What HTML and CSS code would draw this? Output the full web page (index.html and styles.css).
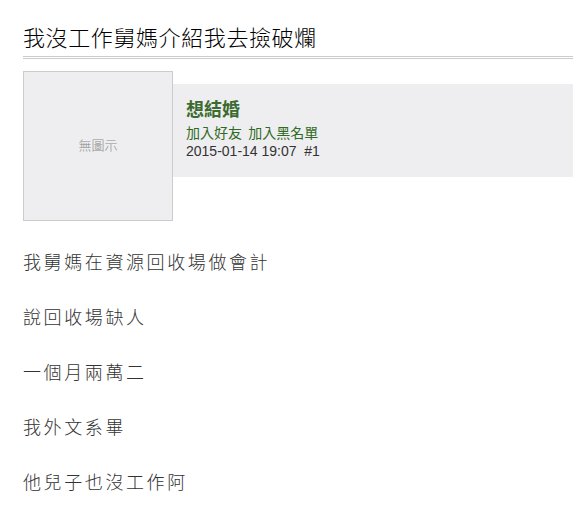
FILE: index.html
```html
<html>
<head>
<meta charset="utf-8">
<link rel="stylesheet" href="styles.css">
</head>
<body>
<div class="page">
	<h1 class="title">我沒工作舅媽介紹我去撿破爛</h1>
	<div class="post_head">
		<div class="avatar">無圖示</div>
		<div class="info">
			<div class="name">想結婚</div>
			<div class="links"><a href="#">加入好友</a>&nbsp; <a href="#">加入黑名單</a></div>
			<div class="date">2015-01-14 19:07&nbsp; #1</div>
		</div>
	</div>
	<div class="content">
		<p>我舅媽在資源回收場做會計</p>
		<p>說回收場缺人</p>
		<p>一個月兩萬二</p>
		<p>我外文系畢</p>
		<p>他兒子也沒工作阿</p>
	</div>
</div>
</body>
</html>
```
FILE: styles.css
```css
body {
	margin: 0;
	background-color: white;
	font-family: "Noto Sans CJK TC", "Liberation Sans", sans-serif;
	color: #333;
	overflow: hidden;
}
.page {
	padding: 21px 0 0 23px;
}

.title {
	margin: 0;
	font-size: 22px;
	font-weight: 300;
	line-height: 30px;
	letter-spacing: 0.6px;
	color: #000;
	padding-bottom: 5px;
	border-bottom: 3px double #cccccc;
}

.post_head {
	display: flex;
	align-items: flex-start;
	margin-top: 12px;
}
.avatar {
	flex: none;
	width: 148px;
	height: 145px;
	padding-bottom: 3px;
	background-color: #eeeef0;
	border: 1px solid #cccccc;
	display: flex;
	align-items: center;
	justify-content: center;
	font-size: 13px;
	font-weight: 300;
	color: #8a8a8a;
}
.info {
	flex: 1;
	margin-top: 13px;
	height: 93px;
	box-sizing: border-box;
	padding: 12px 0 0 13px;
	background-color: #eeeef0;
}
.name {
	font-size: 18px;
	font-weight: bold;
	line-height: 24px;
	color: #3b6b2f;
}
.links {
	font-size: 14px;
	line-height: 19px;
	margin-top: 3px;
}
.links a {
	color: #2f6b25;
	text-decoration: none;
}
.date {
	font-family: "Liberation Sans", Arial, sans-serif;
	font-size: 14px;
	line-height: 18px;
	color: #333;
}

.content {
	display: flex;
	flex-direction: column;
	gap: 27px;
	margin-top: 26px;
}
.content p {
	margin: 0;
	font-size: 18px;
	font-weight: 300;
	line-height: 28px;
	letter-spacing: 2.6px;
	color: #333;
}
```
